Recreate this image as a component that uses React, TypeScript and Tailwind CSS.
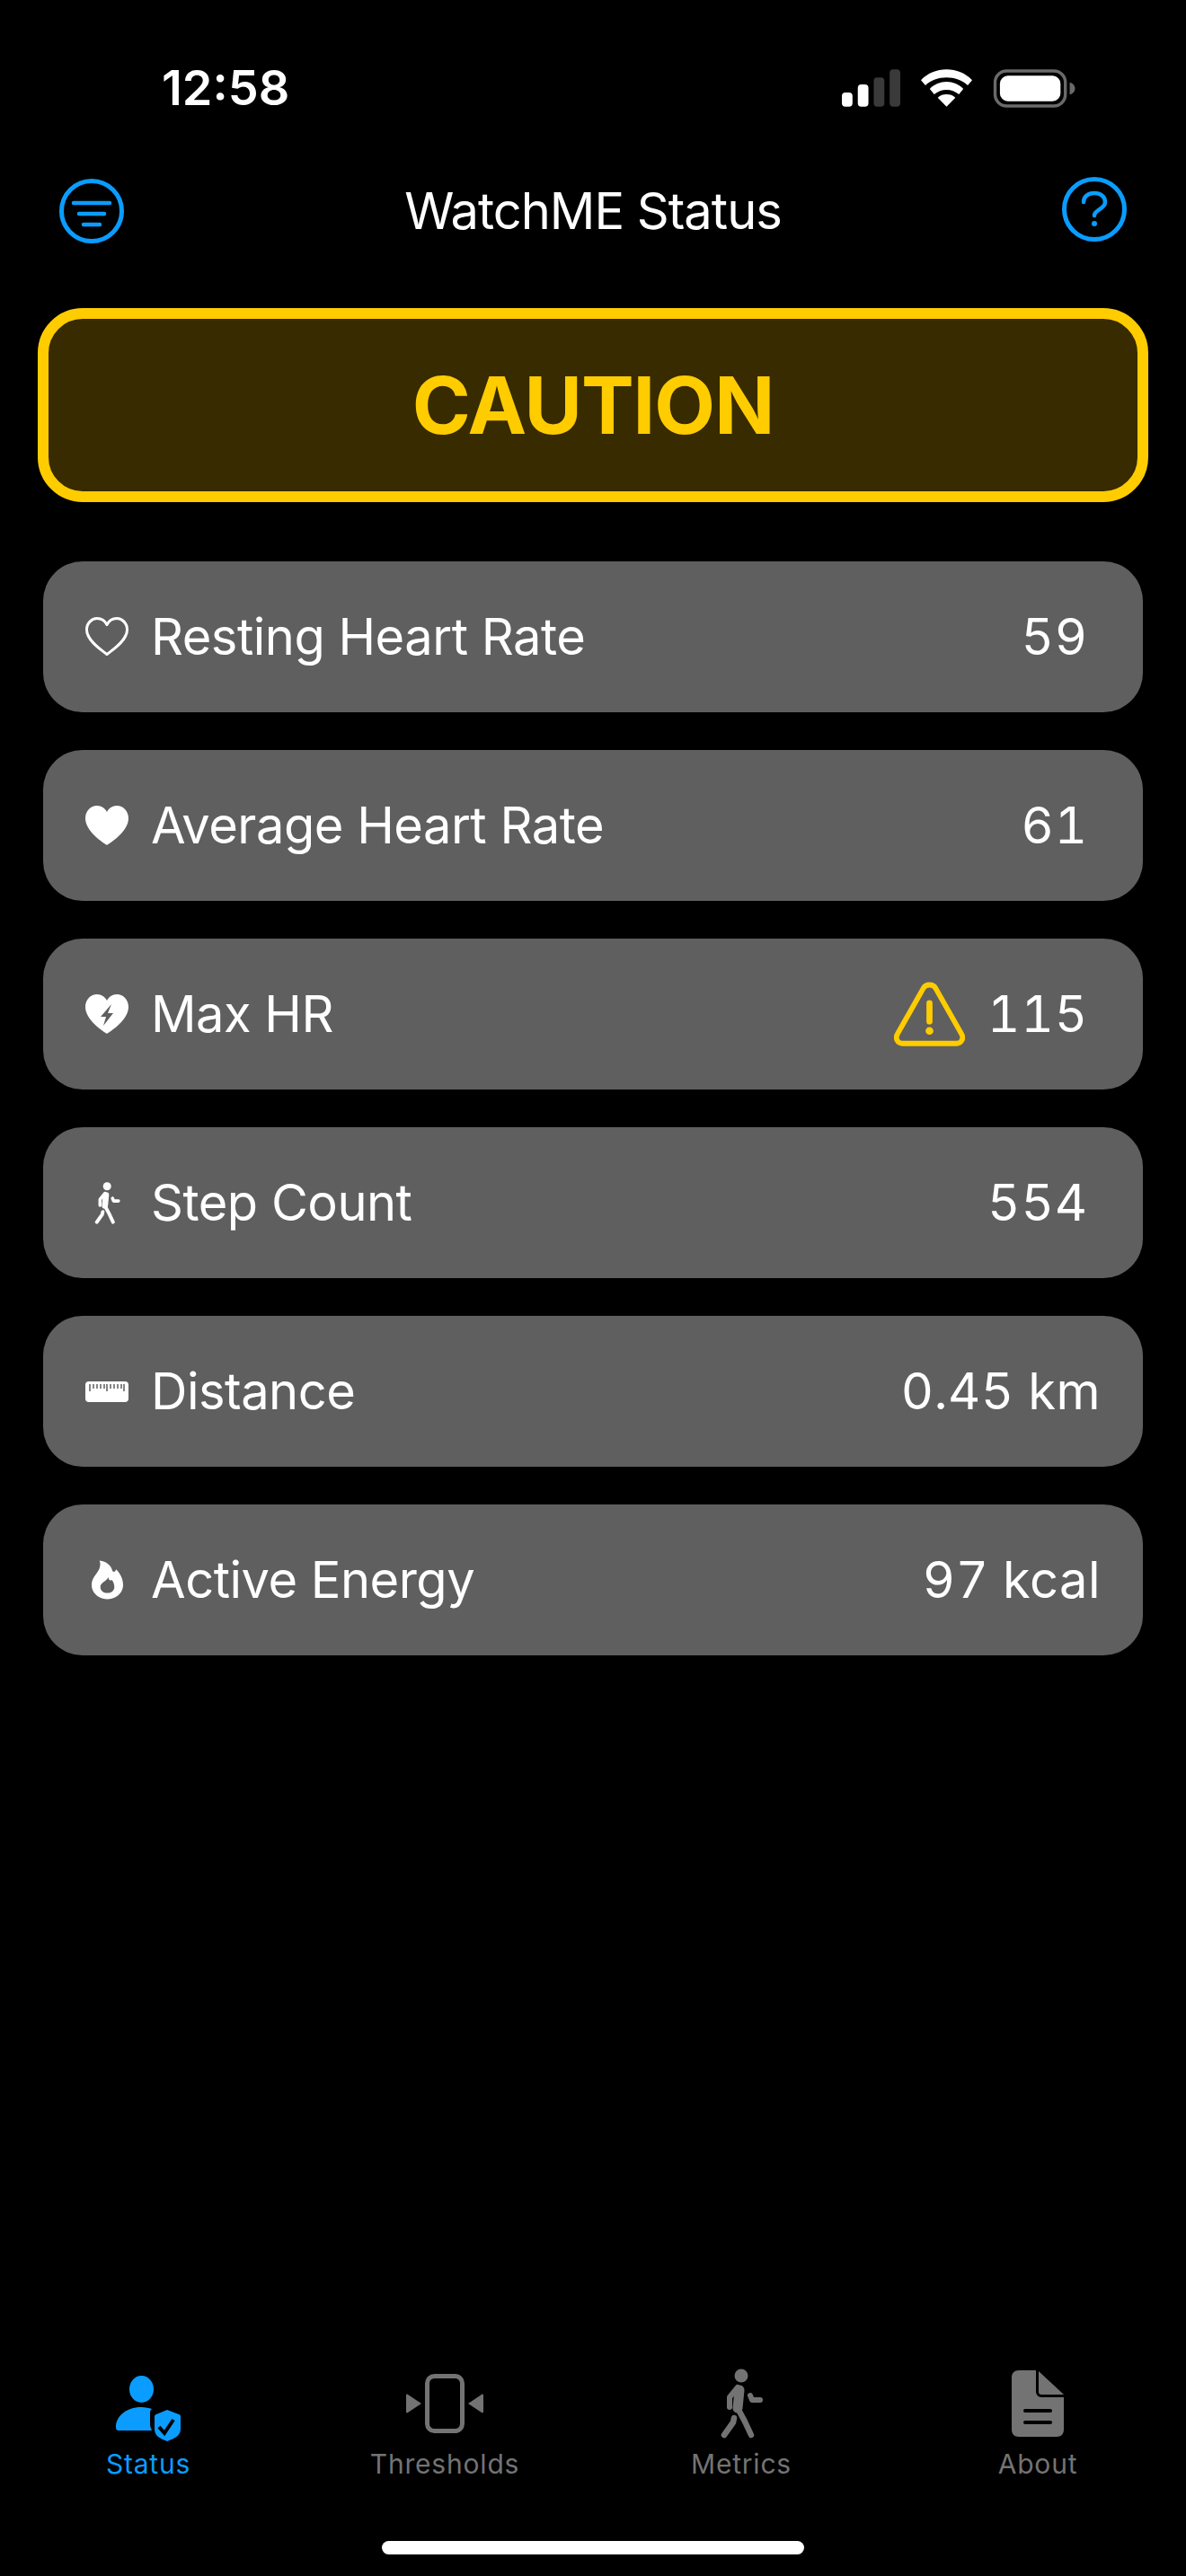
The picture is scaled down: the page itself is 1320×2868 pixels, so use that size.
const ROWS = [
  { icon: <HeartOutline />, label: 'Resting Heart Rate', value: '59' },
  { icon: <HeartFill />, label: 'Average Heart Rate', value: '61' },
  { icon: <HeartBolt />, label: 'Max HR', value: '115', warn: true },
  { icon: <Walker width={29} height={47} color="#fff" />, label: 'Step Count', value: '554' },
  { icon: <Ruler />, label: 'Distance', value: '0.45 km', unit: true },
  { icon: <Flame />, label: 'Active Energy', value: '97 kcal', unit: true },
]

export default function App() {
  return (
    <div className="w-[1320px] h-[2868px] bg-black flex flex-col text-white font-['Inter',sans-serif]">
      <StatusBar />
      <div className="flex items-center justify-between h-[80px] mt-[57px] px-[66px]">
        <FilterIcon />
        <h1 className="text-[56px] leading-[80px] font-normal tracking-[-1px]">WatchME Status</h1>
        <HelpIcon />
      </div>

      <div className="mx-[42px] mt-[68px] h-[216px] rounded-[50px] border-[12px] border-[#ffcc00] bg-[#382b00] flex items-center justify-center">
        <span className="text-[88px] font-bold tracking-[-1px] text-[#ffcc00]">CAUTION</span>
      </div>

      <div className="mx-[48px] mt-[66px] flex flex-col gap-[42px]">
        {ROWS.map((row) => (
          <div key={row.label} className="h-[168px] rounded-[44px] bg-[#5f5f5f] flex items-center pl-[47px]">
            <div className="w-[48px] h-[48px] flex items-center justify-center">{row.icon}</div>
            <span className="ml-[25px] text-[56px] tracking-[-0.5px]">{row.label}</span>
            <div className={`ml-auto flex items-center ${row.unit ? 'pr-[47px]' : 'pr-[61px]'}`}>
              {row.warn && <WarnIcon />}
              <span className={`text-[56px] tabular-nums ${row.unit ? 'tracking-[0.5px]' : 'tracking-[1px]'}`}>{row.value}</span>
            </div>
          </div>
        ))}
      </div>

      <div className="mt-auto grid grid-cols-4">
        <Tab label="Status" active icon={<StatusTab />} />
        <Tab label="Thresholds" icon={<ThresholdsTab />} />
        <Tab label="Metrics" icon={<Walker width={47} height={78} color="#737373" />} />
        <Tab label="About" icon={<AboutTab />} />
      </div>
      <div className="flex justify-center mt-[66px] mb-[24px]">
        <div className="w-[470px] h-[15px] rounded-full bg-white" />
      </div>
    </div>
  )
}

function StatusBar() {
  return (
    <div className="h-[80px] mt-[58px] flex items-center justify-between pl-[180px] pr-[122px]">
      <span className="text-[54px] font-semibold leading-[40px]">12:58</span>
      <div className="flex items-center gap-[23px]">
        <svg width="65" height="42" viewBox="0 0 66 42">
          <rect x="0" y="26" width="12" height="16" rx="4" fill="#fff" />
          <rect x="18" y="17" width="12" height="25" rx="4" fill="#fff" />
          <rect x="36" y="9" width="12" height="33" rx="4" fill="#3a3a3a" />
          <rect x="54" y="0" width="12" height="42" rx="4" fill="#3a3a3a" />
        </svg>
        <svg width="57" height="42" viewBox="0 0 58 42">
          <path d="M29 0C18 0 8 4 0 12l5 6c6-6 15-9 24-9s18 3 24 9l5-6C50 4 40 0 29 0Z" fill="#fff" />
          <path d="M29 14c-7 0-14 3-19 8l5 6c4-3 9-5 14-5s10 2 14 5l5-6c-5-5-12-8-19-8Z" fill="#fff" />
          <path d="M29 28c-4 0-7 1-10 4l10 10 10-10c-3-3-6-4-10-4Z" fill="#fff" />
        </svg>
        <svg width="93" height="43" viewBox="0 0 94 44">
          <rect x="2" y="2" width="80" height="40" rx="13" fill="none" stroke="#6a6a6a" strokeWidth="3.500" />
          <rect x="7.500" y="7.500" width="69" height="29" rx="9" fill="#fff" />
          <path d="M87 15c4 1 6 4 6 7s-2 6-6 7Z" fill="#6a6a6a" />
        </svg>
      </div>
    </div>
  )
}

function Tab({ label, icon, active }: { label: string; icon: React.ReactNode; active?: boolean }) {
  return (
    <div className={`flex flex-col items-center ${active ? 'text-[#0a9dff]' : 'text-[#737373]'}`}>
      <div className="h-[84px] flex items-center justify-center">{icon}</div>
      <span className="mt-[5px] text-[30px] leading-[40px] tracking-[0.8px]">{label}</span>
    </div>
  )
}

function HeartOutline() {
  return (
    <svg width="48" height="44" viewBox="0 0 48 44">
      <path d="M24 41.500C20 38 1.500 27 1.500 14 1.500 7 7 1.500 13 1.500c5 0 9 3 11 7 2-4 6-7 11-7 6 0 11.500 5.500 11.500 12.500 0 13-18.500 24-22.500 27.500Z" fill="none" stroke="#fff" strokeWidth="3" strokeLinejoin="round" />
    </svg>
  )
}

function HeartFill() {
  return (
    <svg width="48" height="44" viewBox="0 0 48 44">
      <path d="M24 44C20 41 0 29 0 14 0 6 6 0 13 0c5 0 9 3 11 7 2-4 6-7 11-7 7 0 13 6 13 14 0 15-20 27-24 30Z" fill="#fff" />
    </svg>
  )
}

function HeartBolt() {
  return (
    <svg width="48" height="44" viewBox="0 0 48 44">
      <path d="M24 44C20 41 0 29 0 14 0 6 6 0 13 0c5 0 9 3 11 7 2-4 6-7 11-7 7 0 13 6 13 14 0 15-20 27-24 30Z" fill="#fff" />
      <path d="M29 11 17 25h6l-3 10 11-14h-6l4-10Z" fill="#5f5f5f" />
    </svg>
  )
}

// same walking figure is used in the Step Count row and the Metrics tab
function Walker({ width, height, color }: { width: number; height: number; color: string }) {
  return (
    <svg width={width} height={height} viewBox="0 0 47 78" fill="none" stroke={color} strokeLinecap="round" strokeLinejoin="round">
      <circle cx="23" cy="8" r="7.500" fill={color} stroke="none" />
      <path d="M21 24 19 44" strokeWidth="11" />
      <path d="M19 21 10 32v11" strokeWidth="6" />
      <path d="M33 30l2 5h9" strokeWidth="6" />
      <path d="M19 44l8 15 7 15" strokeWidth="6.500" />
      <path d="M15 55l-1 5L4 74" strokeWidth="6.500" />
    </svg>
  )
}

function Ruler() {
  return (
    <svg width="48" height="23" viewBox="0 0 48 23">
      <rect width="48" height="23" rx="4" fill="#fff" />
      <path d="M5 3v8M9 3v5M13 3v5M17 3v5M21 3v5M24 3v8M28 3v5M32 3v5M36 3v5M40 3v5M43 3v8" stroke="#5f5f5f" strokeWidth="1.500" />
    </svg>
  )
}

function Flame() {
  return (
    <svg width="35" height="44" viewBox="0 0 36 44">
      <path d="M9 0c8 1 13 5 15 12 1 1 2 1 3 0l1-2c5 5 8 11 8 18 0 9-8 16-18 16S0 37 0 28c0-6 3-10 6-14 3-4 5-9 3-14Z" fill="#fff" />
      <path d="M19 19c1 4 2 4 4 3 1 1 3 4 3 8 0 5-4 7-8 7s-8-2-8-7c0-5 7-6 9-11Z" fill="#5f5f5f" />
    </svg>
  )
}

function WarnIcon() {
  return (
    <svg width="79" height="72" viewBox="0 0 82 74" className="mr-[25px]">
      <path d="M34 7c3-5 11-5 14 0l30 53c3 5 0 11-6 11H10c-6 0-9-6-6-11Z" fill="none" stroke="#ffcc00" strokeWidth="6" strokeLinejoin="round" />
      <rect x="37.500" y="21" width="7" height="28" rx="3.500" fill="#ffcc00" />
      <circle cx="41" cy="56.500" r="4.500" fill="#ffcc00" />
    </svg>
  )
}

function FilterIcon() {
  return (
    <svg width="72" height="72" viewBox="0 0 72 72" fill="none" stroke="#0a9dff" strokeLinecap="round">
      <circle cx="36" cy="36" r="33.500" strokeWidth="5" />
      <path d="M16 27h40M22 39h28M27 51h18" strokeWidth="4.500" />
    </svg>
  )
}

function HelpIcon() {
  return (
    <svg width="72" height="72" viewBox="0 0 72 72" fill="none" stroke="#0a9dff" strokeLinecap="round" className="mb-[5px]">
      <circle cx="36" cy="36" r="33.500" strokeWidth="5" />
      <path d="M24 28c0-6 5-10 12-10s12 4 12 10c0 8-12 8-12 15" strokeWidth="4.500" />
      <circle cx="36" cy="52" r="3" fill="#0a9dff" stroke="none" />
    </svg>
  )
}

function StatusTab() {
  return (
    <svg width="72" height="84" viewBox="0 -11 72 84" fill="#0a9dff">
      <ellipse cx="28.500" cy="15" rx="13.500" ry="15" />
      <path d="M3 61C1 61 0 60 0 57 0 45 12 35 28 35c5 0 9 1 12 2-1 1-2 2-2 4v13c0 2 1 5 2 7Z" />
      <path d="M57 38l13 5c1 0 2 1 2 3v13c0 8-7 11-15 14-8-3-14-6-14-14V46c0-2 1-3 2-3Z" />
      <path d="M48 57l6 7 10-15" fill="none" stroke="#000" strokeWidth="4" />
    </svg>
  )
}

function ThresholdsTab() {
  return (
    <svg width="86" height="66" viewBox="0 0 86 66" fill="#737373">
      <rect x="23.500" y="2.500" width="39" height="61" rx="8" fill="none" stroke="#737373" strokeWidth="5" />
      <path d="M0 24c0-1 1-2 2-1l15 10-15 10c-1 1-2 0-2-1Z" />
      <path d="M86 24c0-1-1-2-2-1L69 33l15 10c1 1 2 0 2-1Z" />
    </svg>
  )
}

function AboutTab() {
  return (
    <svg width="58" height="74" viewBox="0 0 58 74" fill="#737373">
      <path d="M8 0h19v24c0 3 3 6 6 6h25v36c0 5-3 8-8 8H8c-5 0-8-3-8-8V8c0-5 3-8 8-8Z" />
      <path d="M30 1l28 26H33c-2 0-3-1-3-3Z" />
      <rect x="13" y="43" width="32" height="4" rx="2" fill="#000" />
      <rect x="13" y="56" width="32" height="4" rx="2" fill="#000" />
    </svg>
  )
}
